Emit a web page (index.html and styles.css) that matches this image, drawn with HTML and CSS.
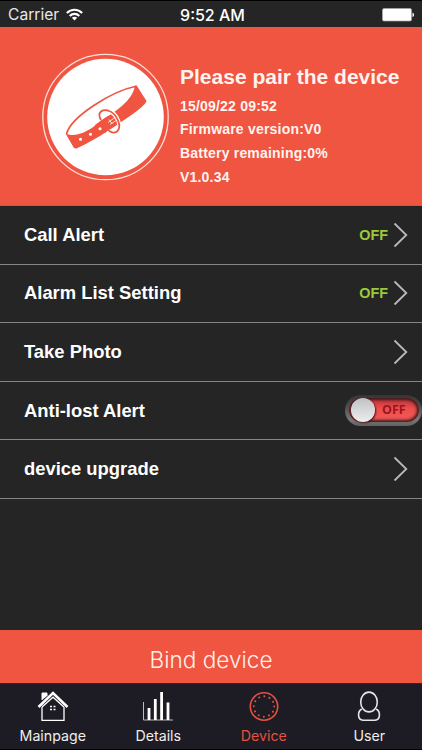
FILE: index.html
```html
<!DOCTYPE html>
<html lang="en">
<head>
<meta charset="utf-8">
<title>Device</title>
<link rel="stylesheet" href="styles.css">
</head>
<body>
<div class="screen">
  <div class="status">
    <div class="carrier"><span class="carrier-name">Carrier</span>
      <svg width="17" height="13" viewBox="0 0 16 12" fill="none" stroke="#fff" stroke-width="2"><path d="M.8 4.6C4.800.5 11.200.5 15.200 4.600M3.500 7.300c2.500-2.500 6.500-2.500 9 0"/><path d="M8 11.600 5.500 9.100c1.500-1.300 3.500-1.300 5 0z" fill="#fff" stroke="none"/></svg>
    </div>
    <span class="clock">9:52 AM</span>
    <svg class="battery" width="33" height="14" viewBox="0 0 33 14"><rect x=".5" y=".5" width="29" height="12.500" rx="1.500" fill="#fff" stroke="#aaa" stroke-width=".7"/><path d="M30.500 4.500c2 .8 2 3.800 0 4.600z" fill="#fff"/></svg>
  </div>
  <header class="hero">
    <svg class="collar" width="128" height="128" viewBox="0 0 128 128">
      <circle cx="64.500" cy="64" r="62.700" fill="none" stroke="#ffe1da" stroke-width="1.300"/>
      <circle cx="64.500" cy="64" r="58.300" fill="#fff"/>
      <path d="M25.500 81C30 63 72 38 94 33.500L95 36" fill="none" stroke="#ef5540" stroke-width="1.700"/>
      <path d="M24.500 80.500c8 3.500 17 .5 27-6L60 67.500C75 58.500 91 48 94 33q1-1.500 2 0l9.500 15c-.5 3-8 9-13 12.500C77 71 57 86 36 95.200q-2 .8-3.500-1z" fill="#ef5540"/>
      <path d="M60 67c-4-7 0-11 7-9.500 9 3 14.500 16 9 21-3 2-7 1-8.500-1.500" fill="none" stroke="#fff" stroke-width="4.200"/>
      <path d="M54 72 67 63 76 69 64 80z" fill="#ef5540"/>
      <path d="M60 67c-4-7 0-11 7-9.500 9 3 14.500 16 9 21-3 2-7 1-8.500-1.500" fill="none" stroke="#ef5540" stroke-width="1.800"/>
      <path d="M67 69.500l7-5M69 71.500l6-4M68 66.500l3 4" stroke="#fff" stroke-width=".8"/>
      <g fill="#fff"><circle cx="39.500" cy="86.300" r="1.500"/><circle cx="49.500" cy="81.200" r="1.500"/><circle cx="59" cy="75.700" r="1.500"/></g>
    </svg>
    <div class="info">
      <h1 class="title">Please pair the device</h1>
      <p class="line">15/09/22 09:52</p>
      <p class="line">Firmware version:V0</p>
      <p class="line">Battery remaining:0%</p>
      <p class="line last">V1.0.34</p>
    </div>
  </header>
  <main class="list">
    <div class="row"><span class="label">Call Alert</span><span class="state">OFF</span><svg class="arrow" width="16" height="26" viewBox="0 0 16 26"><path d="M1.500 1.500 13.300 13 1.500 24.500"/></svg></div>
    <div class="row"><span class="label">Alarm List Setting</span><span class="state">OFF</span><svg class="arrow" width="16" height="26" viewBox="0 0 16 26"><path d="M1.500 1.500 13.300 13 1.500 24.500"/></svg></div>
    <div class="row"><span class="label">Take Photo</span><svg class="arrow" width="16" height="26" viewBox="0 0 16 26"><path d="M1.500 1.500 13.300 13 1.500 24.500"/></svg></div>
    <div class="row switch-row"><span class="label">Anti-lost Alert</span><div class="switch"><div class="track"><span class="knob"></span><span class="switch-text">OFF</span></div></div></div>
    <div class="row"><span class="label">device upgrade</span><svg class="arrow" width="16" height="26" viewBox="0 0 16 26"><path d="M1.500 1.500 13.300 13 1.500 24.500"/></svg></div>
  </main>
  <div class="bind"><span>Bind device</span></div>
  <nav class="tabs">
    <div class="tab">
      <svg width="32" height="32" viewBox="0 0 32 32" fill="none" stroke="#fff"><path d="M5 10V3h5v3" fill="#fff" stroke-width="1"/><path d="M1.500 17 16 3l14.500 14" stroke-width="2.600"/><path d="M5 17v13.300h22V17M5 17 16 7.200 27 17" stroke-width="1.300"/><path d="M13 16.500h2m1.500 0h2M13 19.500h2m1.500 0h2" stroke-width="1.600"/></svg>
      <span>Mainpage</span>
    </div>
    <div class="tab">
      <svg width="32" height="32" viewBox="0 0 32 32" fill="none" stroke="#fff"><path d="M1.500 12v18H31" stroke="#bbb"/><path d="M7 30V18M13.300 30V9M19.600 30V2M26 30V12.500" stroke-width="2.800"/></svg>
      <span>Details</span>
    </div>
    <div class="tab active">
      <svg width="32" height="32" viewBox="0 0 32 32" fill="none" stroke="#e4513f"><circle cx="16" cy="16.500" r="13.700" stroke-width="1.600"/><circle cx="16" cy="16.500" r="10.200" stroke-width="1.900" stroke-linecap="round" stroke-dasharray=".1 5.241"/></svg>
      <span>Device</span>
    </div>
    <div class="tab">
      <svg width="32" height="32" viewBox="0 0 32 32" fill="none" stroke="#e5e5e8" stroke-width="1.600"><ellipse cx="16" cy="12" rx="8.300" ry="9.900"/><path d="M8.800 19c-4.500 2.500-4.500 10.700 1.200 11.200h12c5.700-.5 5.700-8.700 1.200-11.200"/></svg>
      <span>User</span>
    </div>
  </nav>
</div>
</body>
</html>
```
FILE: styles.css
```css
* { box-sizing: border-box; }
body { margin: 0; background: #252525; }
h1, p { margin: 0; }
svg { display: block; flex: none; }
.screen { width: 422px; height: 750px; display: flex; flex-direction: column; overflow: hidden; background: #252525; color: #fff; font-family: "Liberation Sans", Arial, sans-serif; border-bottom: 1px solid #000; }
.status { height: 27px; flex: none; display: grid; grid-template-columns: 1fr auto 1fr; align-items: center; padding: 1px 7px 0 8px; border-top: 1px solid #000; font-family: Inter, sans-serif; line-height: 20px; }
.carrier { display: flex; align-items: center; gap: 7px; }
.carrier-name { font-size: 15.600px; color: #e8e8e8; }
.clock { font-weight: 500; font-size: 16px; padding-left: 2px; }
.battery { justify-self: end; }
.hero { height: 178px; flex: none; background: #ef5540; display: flex; padding: 26px 0 0 41px; }
.info { padding: 10px 0 0 11px; font-weight: bold; color: #fff3ef; white-space: nowrap; }
.title { font-size: 21px; line-height: 28px; font-weight: bold; }
.line { font-size: 14px; line-height: 23px; height: 23.300px; letter-spacing: .2px; }
.title + .line { margin-top: 4px; }
.last { margin-top: 1px; }
.list { flex: 1; border-top: 1px solid #777; }
.row { height: 58.600px; display: flex; align-items: center; padding: 0 13px 0 24px; border-bottom: 1px solid #858587; }
.label { flex: 1; font-size: 18.400px; font-weight: bold; white-space: nowrap; }
.state { color: #9cc83c; font-weight: bold; font-size: 14.400px; margin-right: 5px; }
.arrow { fill: none; stroke: #b9b9b9; stroke-width: 1.800; }
.switch-row { padding-right: 0; }
.switch { width: 77px; height: 31px; flex: none; border-radius: 16px; padding: 3px 3px 3px 4px; background: linear-gradient(#343434, #4c4c4c 35%, #777 80%, #606060); }
.track { height: 24px; border-radius: 12px; background: linear-gradient(#b9303a, #ee4e4d 45%, #f15a59); box-shadow: inset 0 0 3px 2px #3b1a1c; display: flex; align-items: center; }
.knob { width: 24px; height: 24px; margin-left: 2px; flex: none; border-radius: 50%; background: linear-gradient(#bfc1c3, #eee); box-shadow: 1px 1px 2px #511; }
.switch-text { margin-left: 7px; font-family: "Open Sans", sans-serif; font-weight: 700; font-size: 12.500px; line-height: 18px; color: #9c151d; }
.bind { height: 53px; flex: none; background: #ef5540; display: flex; align-items: center; justify-content: center; padding-top: 6px; color: #fff0eb; font-family: Inter, sans-serif; font-size: 22.600px; font-weight: 350; }
.tabs { height: 66px; flex: none; background: #1d1b24; border-top: 1px solid #431f20; display: grid; grid-template-columns: repeat(4, 1fr); }
.tab { display: flex; flex-direction: column; align-items: center; padding-top: 6px; font-family: Inter, sans-serif; font-size: 14.200px; line-height: 20px; color: #eee; }
.tab span { margin-top: 4px; }
.tab.active { color: #e4513f; }
```
